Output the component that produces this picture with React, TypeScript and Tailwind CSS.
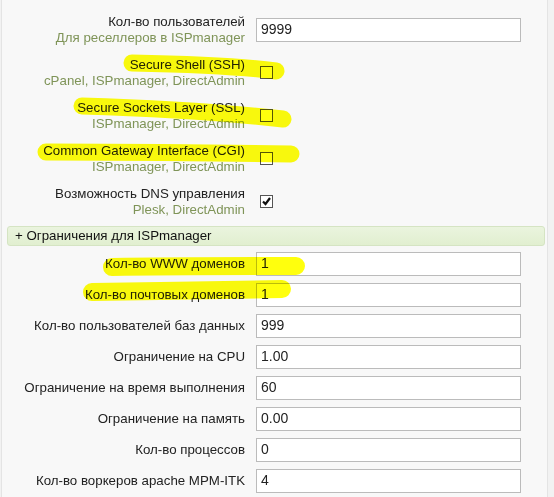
import React from 'react';

type Opt = { label: string; sub: string; checked?: boolean };

const font = { fontFamily: '"Liberation Sans", Arial, sans-serif' };

const Checkbox: React.FC<{ checked?: boolean }> = ({ checked }) => (
  <div className="w-[13px] h-[13px] border border-[#555] bg-white flex items-center justify-center">
    {checked && (
      <svg width="9" height="9" viewBox="0 0 9 9">
        <path d="M1 4.5 L3.5 7 L8 1" fill="none" stroke="#111" strokeWidth="2.2" />
      </svg>
    )}
  </div>
);

const Label: React.FC<{ text: string; sub?: string }> = ({ text, sub }) => (
  <div className="w-[245px] text-right leading-[16px] text-[13.3px] pr-[2px]">
    <div className="text-[#222]">{text}</div>
    {sub && <div className="text-[#7f9458]">{sub}</div>}
  </div>
);

const Field: React.FC<{ value: string }> = ({ value }) => (
  <div className="ml-[9px] w-[265px] h-[24px] border border-[#bbb] bg-white pl-[4px] flex items-center text-[14px] text-[#222]">
    {value}
  </div>
);

const checks: Opt[] = [
  { label: 'Secure Shell (SSH)', sub: 'cPanel, ISPmanager, DirectAdmin' },
  { label: 'Secure Sockets Layer (SSL)', sub: 'ISPmanager, DirectAdmin' },
  { label: 'Common Gateway Interface (CGI)', sub: 'ISPmanager, DirectAdmin' },
  { label: 'Возможность DNS управления', sub: 'Plesk, DirectAdmin', checked: true },
];

const limits: [string, string][] = [
  ['Кол-во WWW доменов', '1'],
  ['Кол-во почтовых доменов', '1'],
  ['Кол-во пользователей баз данных', '999'],
  ['Ограничение на CPU', '1.00'],
  ['Ограничение на время выполнения', '60'],
  ['Ограничение на память', '0.00'],
  ['Кол-во процессов', '0'],
  ['Кол-во воркеров apache MPM-ITK', '4'],
];

const App: React.FC = () => {
  return (
    <div style={font} className="relative w-[554px] h-[497px] bg-[#f2f2f2] overflow-hidden">
      <div className="ml-[1px] w-[547px] h-full bg-[#f8f8f8] border-l border-r border-[#e4e4e4] pt-[8px]">
        <div className="h-[43px] flex items-center">
          <Label text="Кол-во пользователей" sub="Для реселлеров в ISPmanager" />
          <Field value="9999" />
        </div>
        {checks.map((c) => (
          <div key={c.label} className="h-[43px] flex items-center">
            <Label text={c.label} sub={c.sub} />
            <div className="ml-[13px]">
              <Checkbox checked={c.checked} />
            </div>
          </div>
        ))}
        <div className="mt-[3px] ml-[5px] mr-[2px] h-[20px] rounded-[3px] border border-[#d5e4c3] bg-gradient-to-b from-[#eaf4de] to-[#e1efd0] flex items-center pl-[7px] text-[13.3px] text-[#111]">
          + Ограничения для ISPmanager
        </div>
        <div className="mt-[2px]">
          {limits.map(([l, v]) => (
            <div key={l} className="h-[31px] flex items-center">
              <Label text={l} />
              <Field value={v} />
            </div>
          ))}
        </div>
      </div>

      {/* marker highlights */}
      <svg
        className="absolute inset-0 pointer-events-none mix-blend-multiply"
        width="554"
        height="497"
        viewBox="0 0 554 497"
      >
        <g stroke="#ffff00" strokeLinecap="round" fill="none" opacity="0.95">
          <path d="M132 63 C180 64 240 66 276 71" strokeWidth="17" />
          <path d="M82 106 C150 108 220 112 283 119" strokeWidth="17" />
          <path d="M46 152 C120 152 220 153 291 154" strokeWidth="17" />
          <path d="M112 267 C170 266 240 266 296 266" strokeWidth="18" />
          <path d="M92 292 C150 291 230 290 282 289" strokeWidth="18" />
        </g>
      </svg>
    </div>
  );
};

export default App;
